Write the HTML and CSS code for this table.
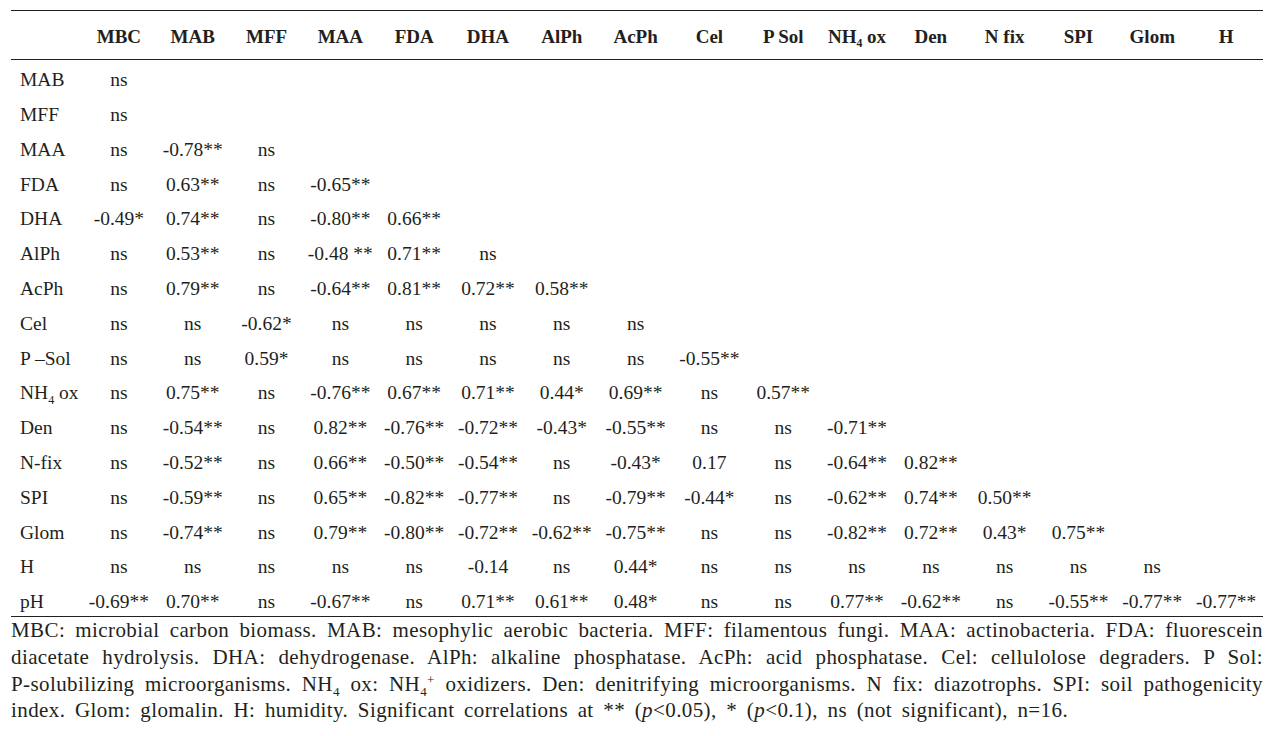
FILE: index.html
```html
<!DOCTYPE html>
<html lang="en">
<head>
<meta charset="utf-8">
<title>Correlation table</title>
<link rel="stylesheet" href="styles.css">
</head>
<body>
<div class="page">
<table class="corr">
<colgroup><col class="c-label"><col span="16"></colgroup>
<thead>
<tr><th></th><th>MBC</th><th>MAB</th><th>MFF</th><th>MAA</th><th>FDA</th><th>DHA</th><th>AlPh</th><th>AcPh</th><th>Cel</th><th>P Sol</th><th>NH<sub>4</sub> ox</th><th>Den</th><th>N fix</th><th>SPI</th><th>Glom</th><th>H</th></tr>
</thead>
<tbody>
<tr><td>MAB</td><td>ns</td><td></td><td></td><td></td><td></td><td></td><td></td><td></td><td></td><td></td><td></td><td></td><td></td><td></td><td></td><td></td></tr>
<tr><td>MFF</td><td>ns</td><td></td><td></td><td></td><td></td><td></td><td></td><td></td><td></td><td></td><td></td><td></td><td></td><td></td><td></td><td></td></tr>
<tr><td>MAA</td><td>ns</td><td>-0.78**</td><td>ns</td><td></td><td></td><td></td><td></td><td></td><td></td><td></td><td></td><td></td><td></td><td></td><td></td><td></td></tr>
<tr><td>FDA</td><td>ns</td><td>0.63**</td><td>ns</td><td>-0.65**</td><td></td><td></td><td></td><td></td><td></td><td></td><td></td><td></td><td></td><td></td><td></td><td></td></tr>
<tr><td>DHA</td><td>-0.49*</td><td>0.74**</td><td>ns</td><td>-0.80**</td><td>0.66**</td><td></td><td></td><td></td><td></td><td></td><td></td><td></td><td></td><td></td><td></td><td></td></tr>
<tr><td>AlPh</td><td>ns</td><td>0.53**</td><td>ns</td><td>-0.48 **</td><td>0.71**</td><td>ns</td><td></td><td></td><td></td><td></td><td></td><td></td><td></td><td></td><td></td><td></td></tr>
<tr><td>AcPh</td><td>ns</td><td>0.79**</td><td>ns</td><td>-0.64**</td><td>0.81**</td><td>0.72**</td><td>0.58**</td><td></td><td></td><td></td><td></td><td></td><td></td><td></td><td></td><td></td></tr>
<tr><td>Cel</td><td>ns</td><td>ns</td><td>-0.62*</td><td>ns</td><td>ns</td><td>ns</td><td>ns</td><td>ns</td><td></td><td></td><td></td><td></td><td></td><td></td><td></td><td></td></tr>
<tr><td>P –Sol</td><td>ns</td><td>ns</td><td>0.59*</td><td>ns</td><td>ns</td><td>ns</td><td>ns</td><td>ns</td><td>-0.55**</td><td></td><td></td><td></td><td></td><td></td><td></td><td></td></tr>
<tr><td>NH<sub>4</sub> ox</td><td>ns</td><td>0.75**</td><td>ns</td><td>-0.76**</td><td>0.67**</td><td>0.71**</td><td>0.44*</td><td>0.69**</td><td>ns</td><td>0.57**</td><td></td><td></td><td></td><td></td><td></td><td></td></tr>
<tr><td>Den</td><td>ns</td><td>-0.54**</td><td>ns</td><td>0.82**</td><td>-0.76**</td><td>-0.72**</td><td>-0.43*</td><td>-0.55**</td><td>ns</td><td>ns</td><td>-0.71**</td><td></td><td></td><td></td><td></td><td></td></tr>
<tr><td>N-fix</td><td>ns</td><td>-0.52**</td><td>ns</td><td>0.66**</td><td>-0.50**</td><td>-0.54**</td><td>ns</td><td>-0.43*</td><td>0.17</td><td>ns</td><td>-0.64**</td><td>0.82**</td><td></td><td></td><td></td><td></td></tr>
<tr><td>SPI</td><td>ns</td><td>-0.59**</td><td>ns</td><td>0.65**</td><td>-0.82**</td><td>-0.77**</td><td>ns</td><td>-0.79**</td><td>-0.44*</td><td>ns</td><td>-0.62**</td><td>0.74**</td><td>0.50**</td><td></td><td></td><td></td></tr>
<tr><td>Glom</td><td>ns</td><td>-0.74**</td><td>ns</td><td>0.79**</td><td>-0.80**</td><td>-0.72**</td><td>-0.62**</td><td>-0.75**</td><td>ns</td><td>ns</td><td>-0.82**</td><td>0.72**</td><td>0.43*</td><td>0.75**</td><td></td><td></td></tr>
<tr><td>H</td><td>ns</td><td>ns</td><td>ns</td><td>ns</td><td>ns</td><td>-0.14</td><td>ns</td><td>0.44*</td><td>ns</td><td>ns</td><td>ns</td><td>ns</td><td>ns</td><td>ns</td><td>ns</td><td></td></tr>
<tr><td>pH</td><td>-0.69**</td><td>0.70**</td><td>ns</td><td>-0.67**</td><td>ns</td><td>0.71**</td><td>0.61**</td><td>0.48*</td><td>ns</td><td>ns</td><td>0.77**</td><td>-0.62**</td><td>ns</td><td>-0.55**</td><td>-0.77**</td><td>-0.77**</td></tr>
</tbody>
</table>
<p class="note"><span class="ln">MBC: microbial carbon biomass. MAB: mesophylic aerobic bacteria. MFF: filamentous fungi. MAA: actinobacteria. FDA: fluorescein</span>
<span class="ln">diacetate hydrolysis. DHA: dehydrogenase. AlPh: alkaline phosphatase. AcPh: acid phosphatase. Cel: cellulolose degraders. P Sol:</span>
<span class="ln">P-solubilizing microorganisms. NH<sub>4</sub> ox: NH<sub>4</sub><sup>+</sup> oxidizers. Den: denitrifying microorganisms. N fix: diazotrophs. SPI: soil pathogenicity</span>
<span class="ln last">index. Glom: glomalin. H: humidity. Significant correlations at ** (<i>p</i>&lt;0.05), * (<i>p</i>&lt;0.1), ns (not significant), n=16.</span></p>
</div>
</body>
</html>
```

FILE: styles.css
```css
html, body {
  margin: 0;
  padding: 0;
  background: #ffffff;
}

.page {
  padding: 10px 13px 0 11px;
  font-family: "Liberation Serif", "Times New Roman", serif;
  color: #231f20;
}

.corr {
  width: 100%;
  border-collapse: collapse;
  table-layout: fixed;
  font-size: 19.5px;
}

.c-label {
  width: 71px;
}

.corr thead tr {
  height: 49px;
  border-top: 1.5px solid #231f20;
  border-bottom: 1.5px solid #231f20;
}

.corr th {
  font-weight: bold;
  font-size: 19px;
  text-align: center;
  padding: 3px 0 0 0;
  white-space: nowrap;
}

.corr tbody tr {
  height: 34.8px;
}

.corr tbody tr:last-child {
  border-bottom: 1.5px solid #231f20;
}

.corr td {
  text-align: center;
  padding: 6px 0 0 0;
  white-space: nowrap;
  line-height: 1;
}

.corr td:first-child {
  text-align: left;
  padding-left: 9px;
}

sub {
  font-size: 0.62em;
  vertical-align: -0.38em;
  line-height: 0;
}

sup {
  font-size: 0.62em;
  vertical-align: 0.55em;
  line-height: 0;
}

.note {
  margin: 0;
  font-size: 21px;
  letter-spacing: 0.4px;
  line-height: 26.9px;
}

.ln {
  display: block;
  white-space: nowrap;
  text-align: justify;
  text-align-last: justify;
}

.ln.last {
  text-align: left;
  text-align-last: left;
  word-spacing: 4px;
}
```
